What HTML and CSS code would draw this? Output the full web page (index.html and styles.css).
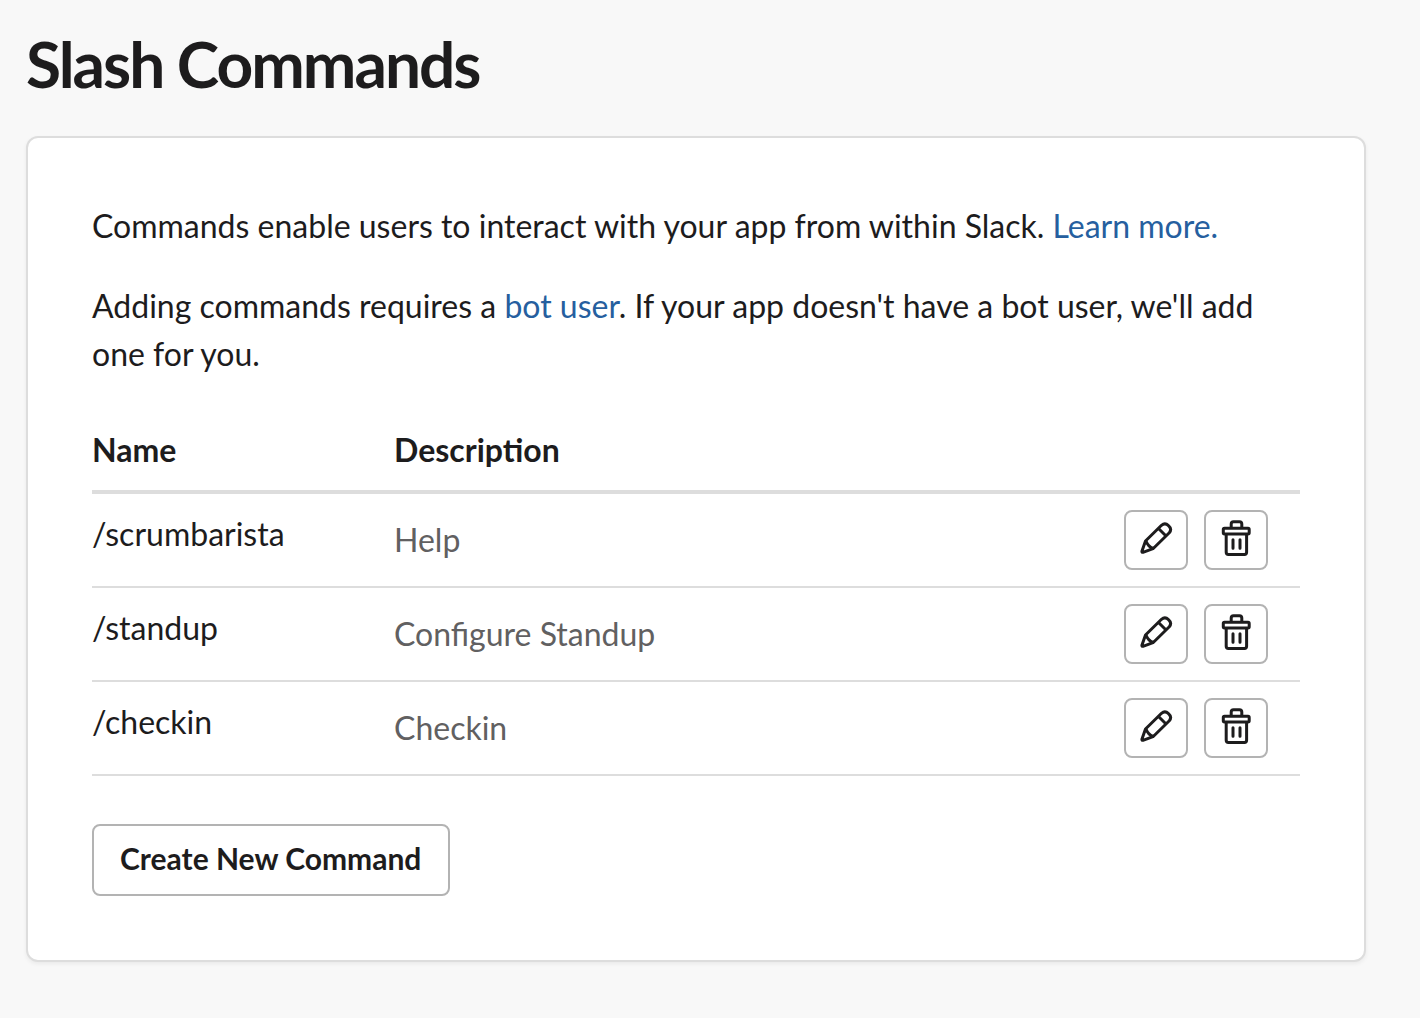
FILE: index.html
```html
<!DOCTYPE html>
<html lang="en">
<head>
<meta charset="utf-8">
<title>Slash Commands</title>
<link rel="stylesheet" href="styles.css">
</head>
<body>
<svg class="sprite" aria-hidden="true">
  <symbol id="icon-pencil" viewBox="0 0 36 36">
    <path d="M4 31 L7.500 21 L23.500 5.300 Q27 2.300 30.500 5.600 Q34.300 9 31.300 12.700 L15 28.700 L5 32.300 Q3.600 32.500 4 31 Z M20.500 8.500 L27.800 15.800 M8 21 Q10 26.500 15 28.500"/>
  </symbol>
  <symbol id="icon-trash" viewBox="0 0 36 36">
    <path d="M6.500 8.300 H30 Q31.200 8.300 31.200 9.500 V12.800 Q31.200 14 30 14 H6.500 Q5.300 14 5.300 12.800 V9.500 Q5.300 8.300 6.500 8.300 Z M13.200 8 V4 Q13.200 1.700 15.500 1.700 H21.500 Q23.800 1.700 23.800 4 V8 M8.200 14 V32.200 Q8.200 34.400 10.400 34.400 H26.400 Q28.600 34.400 28.600 32.200 V14 M15 19.700 V28.300 M22 19.700 V28.300"/>
  </symbol>
</svg>
<main class="page">
  <h1 class="title">Slash Commands</h1>
  <section class="card">
    <p class="text">Commands enable users to interact with your app from within Slack. <a class="link" href="#learn">Learn more.</a></p>
    <p class="text">Adding commands requires a <a class="link" href="#bot">bot user</a>. If your app doesn't have a bot user, we'll add one for you.</p>
    <table class="commands">
      <thead>
        <tr><th class="name" scope="col">Name</th><th scope="col">Description</th><td></td></tr>
      </thead>
      <tbody>
        <tr>
          <td class="command">/scrumbarista</td>
          <td class="description">Help</td>
          <td><div class="actions">
            <button class="icon-button" type="button" aria-label="Edit /scrumbarista"><svg class="icon"><use href="#icon-pencil"/></svg></button>
            <button class="icon-button" type="button" aria-label="Delete /scrumbarista"><svg class="icon"><use href="#icon-trash"/></svg></button>
          </div></td>
        </tr>
        <tr>
          <td class="command">/standup</td>
          <td class="description">Configure Standup</td>
          <td><div class="actions">
            <button class="icon-button" type="button" aria-label="Edit /standup"><svg class="icon"><use href="#icon-pencil"/></svg></button>
            <button class="icon-button" type="button" aria-label="Delete /standup"><svg class="icon"><use href="#icon-trash"/></svg></button>
          </div></td>
        </tr>
        <tr>
          <td class="command">/checkin</td>
          <td class="description">Checkin</td>
          <td><div class="actions">
            <button class="icon-button" type="button" aria-label="Edit /checkin"><svg class="icon"><use href="#icon-pencil"/></svg></button>
            <button class="icon-button" type="button" aria-label="Delete /checkin"><svg class="icon"><use href="#icon-trash"/></svg></button>
          </div></td>
        </tr>
      </tbody>
    </table>
    <button class="create" type="button">Create New Command</button>
  </section>
</main>
</body>
</html>
```
FILE: styles.css
```css
* { box-sizing: border-box; }
body {
  margin: 0;
  background: #f8f8f8;
  color: #1d1c1d;
  font-family: Lato, sans-serif;
  font-size: 32px;
  line-height: 48px;
}
.sprite { position: absolute; width: 0; height: 0; }
.page { padding: 28px 54px 56px 26px; }
.title {
  margin: 0 0 36px;
  font-size: 64px;
  line-height: 72px;
  letter-spacing: -2px;
}
.card {
  padding: 64px;
  background: #fff;
  border: 2px solid #ddd;
  border-radius: 12px;
  box-shadow: 0 2px 4px rgba(0, 0, 0, 0.06);
}
.text { margin: 0 0 32px; }
.link { color: #265f9f; text-decoration: none; }
.commands {
  width: 100%;
  margin: 48px 0;
  border-collapse: separate;
  border-spacing: 0;
  table-layout: fixed;
}
.commands th {
  padding: 0 0 16px;
  text-align: left;
  border-bottom: 4px solid #ddd;
}
.commands thead td { width: 176px; border-bottom: 4px solid #ddd; }
.commands .name { width: 25%; }
.commands tbody td { padding: 0; border-bottom: 2px solid #ddd; }
.commands .command { padding-bottom: 12px; }
.commands .description { color: #616061; }
.actions {
  display: flex;
  gap: 16px;
  padding: 16px 0;
}
.icon-button {
  display: grid;
  place-items: center;
  width: 64px;
  height: 60px;
  padding: 0 0 4px;
  background: #fff;
  border: 2px solid #b3b3b3;
  border-radius: 8px;
  color: inherit;
}
.icon {
  width: 36px;
  height: 36px;
  fill: none;
  stroke: currentColor;
  stroke-width: 3;
  stroke-linejoin: round;
  stroke-linecap: round;
}
.create {
  display: block;
  padding: 8px 27px 12px 26px;
  background: #fff;
  border: 2px solid #b3b3b3;
  border-radius: 8px;
  color: inherit;
  font: bold 30px/48px Lato, sans-serif;
}
```
